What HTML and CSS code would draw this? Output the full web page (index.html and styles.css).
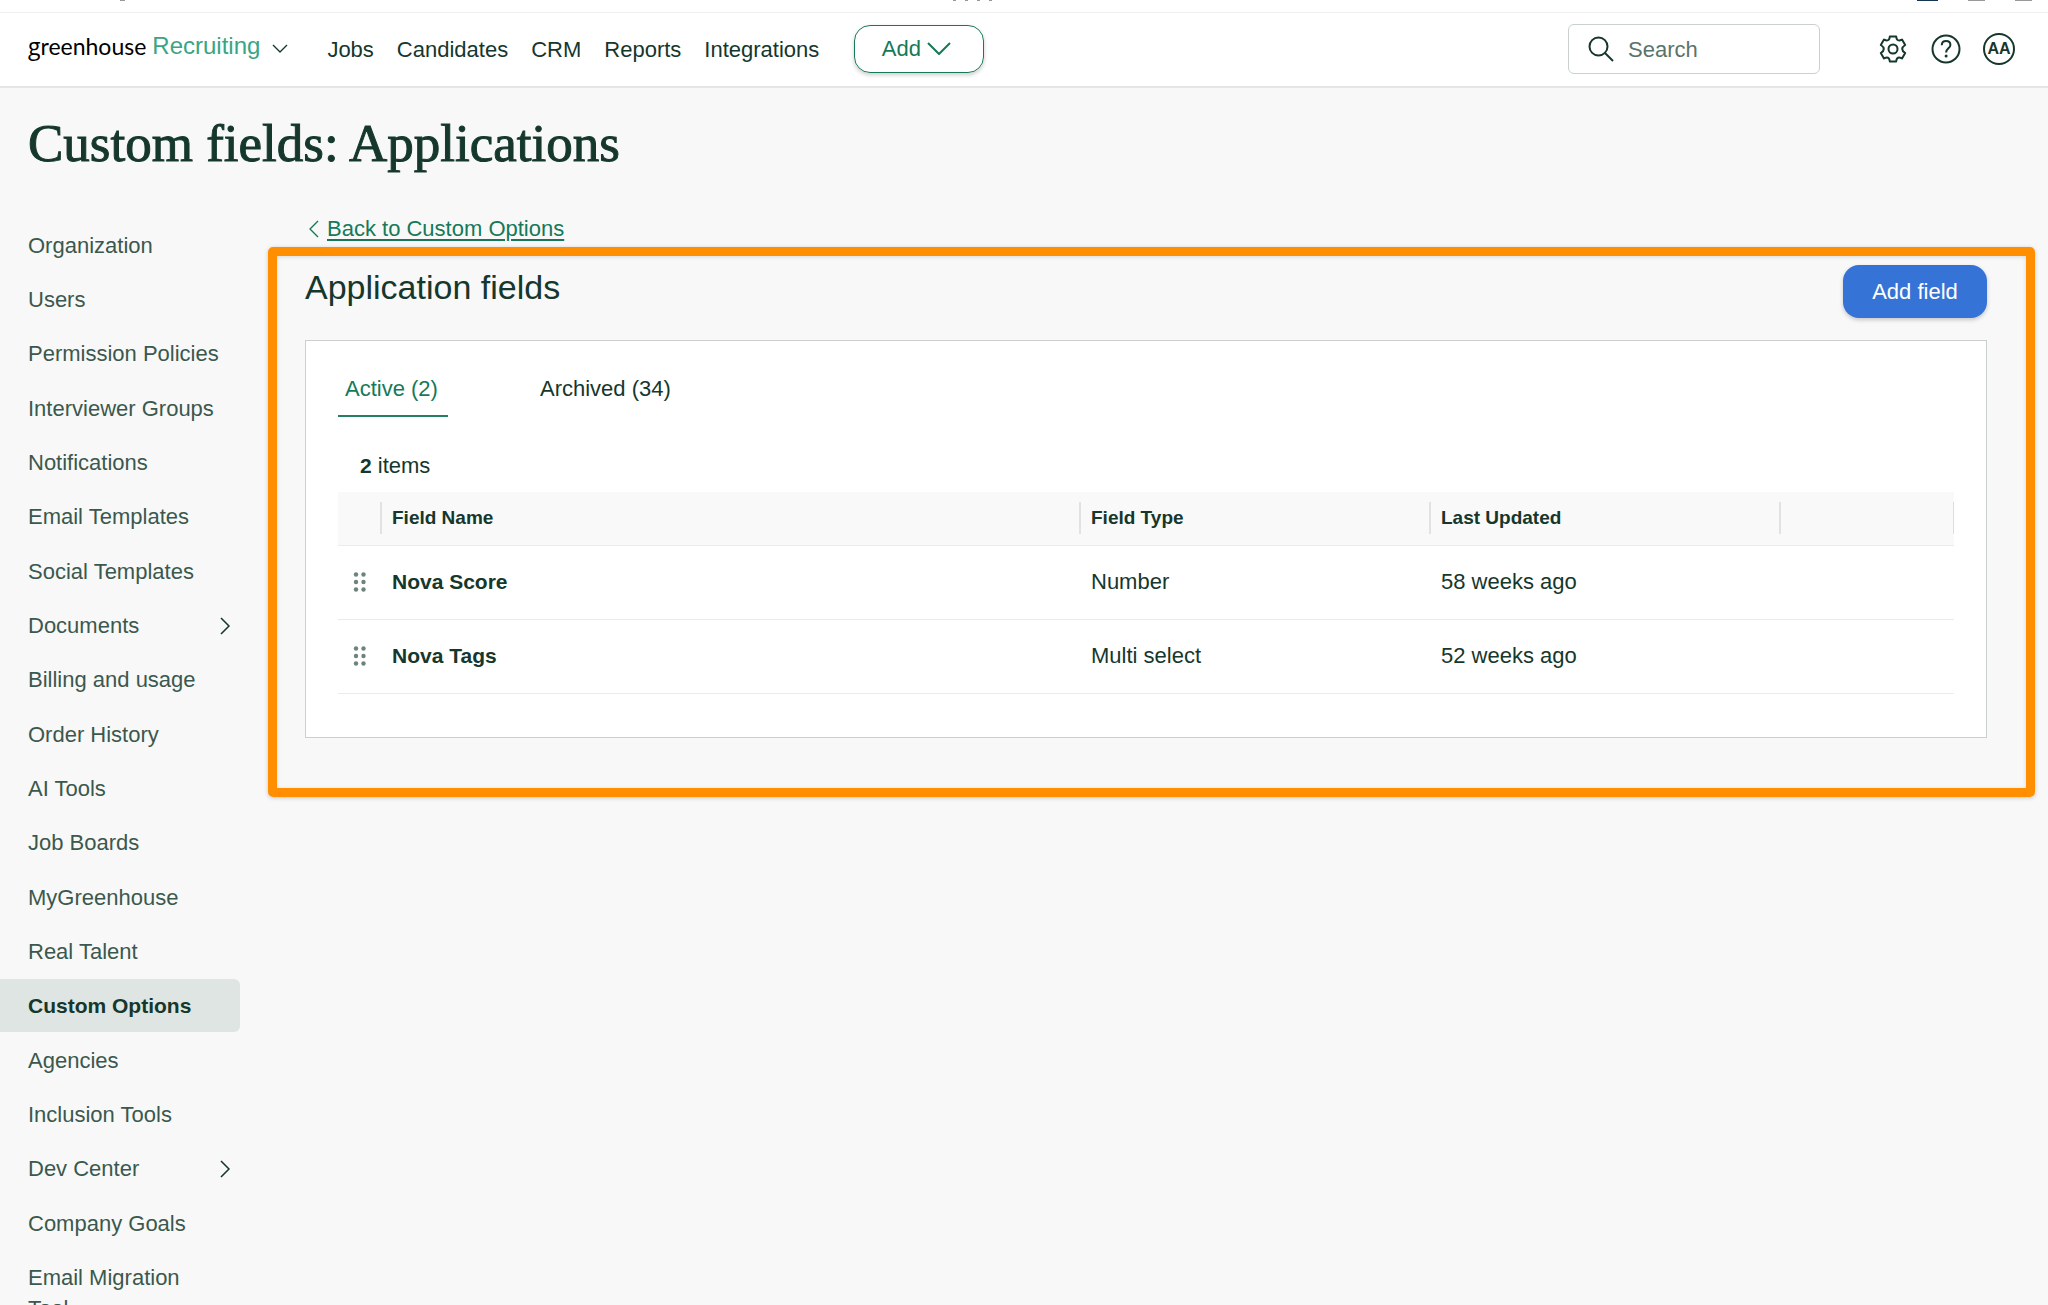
FILE: index.html
```html
<!DOCTYPE html>
<html lang="en">
<head>
<meta charset="utf-8">
<title>Custom fields: Applications</title>
<link rel="stylesheet" href="styles.css">
</head>
<body>
<div class="strip"><i class="bit bit-text"></i><i class="bit bit-mid"></i><span class="strip-end"><i class="bit bit-navy"></i><i class="bit bit-dot"></i><i class="bit bit-dot"></i></span></div>
<header class="header">
  <a class="brand" href="#"><span class="brand-name"><span class="brand-g">g</span>reenhouse</span><span class="brand-product">Recruiting</span>
    <svg class="brand-arrow" width="16" height="10" viewBox="0 0 16 10"><path d="M1 1l7 7 7-7"/></svg></a>
  <nav class="nav">
    <a href="#">Jobs</a><a href="#">Candidates</a><a href="#">CRM</a><a href="#">Reports</a><a href="#">Integrations</a>
  </nav>
  <button class="add" type="button">Add<svg width="24" height="14" viewBox="0 0 24 14"><path d="M1 1l11 11L23 1"/></svg></button>
  <label class="search">
    <svg width="26" height="26" viewBox="0 0 26 26"><circle cx="10.500" cy="10.500" r="9"/><path d="M17 17l8 8"/></svg>
    <input type="search" placeholder="Search" aria-label="Search">
  </label>
  <div class="tools">
    <button type="button" aria-label="Settings"><svg width="32" height="32" viewBox="0 0 32 32"><path d="M12.800 3.500h6.400c.2 2.600 1.200 4 3 4 .9 0 1.700-.4 2.800-.9l3.200 5.400c-2.400 1.500-3 2.700-3 4s.6 2.500 3 4L25 25.400c-1.100-.5-1.900-.9-2.800-.9-1.800 0-2.800 1.400-3 4h-6.400c-.2-2.600-1.200-4-3-4-.9 0-1.700.4-2.800.9L3.800 20c2.400-1.500 3-2.700 3-4s-.6-2.500-3-4L7 6.600c1.100.5 1.900.9 2.800.9 1.800 0 2.800-1.400 3-4z"/><circle cx="16" cy="16" r="4.500"/></svg></button>
    <button type="button" aria-label="Help"><svg width="32" height="32" viewBox="0 0 32 32"><circle cx="16" cy="16" r="13.500"/><path d="M11.800 12.200c0-2.600 1.700-4.200 4.300-4.200s4.300 1.600 4.300 3.900c0 3.500-4.300 3.400-4.300 7.600"/><circle class="dot" cx="16.100" cy="23" r="1.500"/></svg></button>
    <button class="avatar" type="button">AA</button>
  </div>
</header>
<h1 class="title">Custom fields: Applications</h1>
<div class="layout">
  <nav class="side" aria-label="Configure">
    <a href="#">Organization</a>
    <a href="#">Users</a>
    <a href="#">Permission Policies</a>
    <a href="#">Interviewer Groups</a>
    <a href="#">Notifications</a>
    <a href="#">Email Templates</a>
    <a href="#">Social Templates</a>
    <a href="#">Documents<svg width="10" height="18" viewBox="0 0 10 18"><path d="M1 1l8 8-8 8"/></svg></a>
    <a href="#">Billing and usage</a>
    <a href="#">Order History</a>
    <a href="#">AI Tools</a>
    <a href="#">Job Boards</a>
    <a href="#">MyGreenhouse</a>
    <a href="#">Real Talent</a>
    <a class="current" href="#" aria-current="page">Custom Options</a>
    <a href="#">Agencies</a>
    <a href="#">Inclusion Tools</a>
    <a href="#">Dev Center<svg width="10" height="18" viewBox="0 0 10 18"><path d="M1 1l8 8-8 8"/></svg></a>
    <a href="#">Company Goals</a>
    <a href="#">Email Migration Tool</a>
  </nav>
  <main class="main">
    <div class="back"><svg width="10" height="18" viewBox="0 0 10 18"><path d="M9 1L1 9l8 8"/></svg><a href="#">Back to Custom Options</a></div>
    <section class="frame">
      <div class="frame-head">
        <h2>Application fields</h2>
        <button class="primary" type="button">Add field</button>
      </div>
      <div class="card">
        <div class="tabs" role="tablist">
          <button class="tab selected" type="button" role="tab" aria-selected="true">Active (2)</button>
          <button class="tab" type="button" role="tab" aria-selected="false">Archived (34)</button>
        </div>
        <p class="count"><b>2</b> items</p>
        <table class="fields">
          <colgroup><col class="c-grip"><col><col class="c-mid"><col class="c-mid"><col class="c-end"></colgroup>
          <thead>
            <tr><th></th><th><div>Field Name</div></th><th><div>Field Type</div></th><th><div>Last Updated</div></th><th><div class="last"></div></th></tr>
          </thead>
          <tbody>
            <tr><td class="grip"><svg width="14" height="20" viewBox="0 0 14 20"><circle cx="3" cy="2.500" r="2.200"/><circle cx="10.500" cy="2.500" r="2.200"/><circle cx="3" cy="10" r="2.200"/><circle cx="10.500" cy="10" r="2.200"/><circle cx="3" cy="17.500" r="2.200"/><circle cx="10.500" cy="17.500" r="2.200"/></svg></td><td class="name">Nova Score</td><td>Number</td><td>58 weeks ago</td><td></td></tr>
            <tr><td class="grip"><svg width="14" height="20" viewBox="0 0 14 20"><circle cx="3" cy="2.500" r="2.200"/><circle cx="10.500" cy="2.500" r="2.200"/><circle cx="3" cy="10" r="2.200"/><circle cx="10.500" cy="10" r="2.200"/><circle cx="3" cy="17.500" r="2.200"/><circle cx="10.500" cy="17.500" r="2.200"/></svg></td><td class="name">Nova Tags</td><td>Multi select</td><td>52 weeks ago</td><td></td></tr>
          </tbody>
        </table>
      </div>
    </section>
  </main>
</div>
</body>
</html>
```
FILE: styles.css
```css
* { box-sizing: border-box; }
body {
  margin: 0;
  height: 100vh;
  overflow: hidden;
  background: #f8f8f8;
  color: #15372c;
  font: 22px/32px "Liberation Sans", Arial, sans-serif;
}
a { color: inherit; text-decoration: none; }
button { font: inherit; color: inherit; background: none; border: 0; padding: 0; }
svg { fill: none; stroke: currentColor; stroke-width: 2; stroke-linejoin: round; flex: none; }

.strip {
  display: flex;
  align-items: flex-start;
  height: 13px;
  padding: 0 16px 0 120px;
  background: #fff;
  border-bottom: 1px solid #eee;
}
.bit { height: 1px; background: #999; }
.bit-text { width: 5px; }
.bit-mid { width: 42px; margin-left: 828px; background: repeating-linear-gradient(90deg, #999 0 3px, #fff 3px 12px); }
.strip-end { display: flex; gap: 30px; margin-left: auto; }
.bit-navy { width: 21px; background: #16344d; }
.bit-dot { width: 17px; }

.header {
  display: flex;
  align-items: center;
  height: 75px;
  padding: 0 33px 2px 28px;
  background: #fff;
  border-bottom: 2px solid #e5e5e5;
}
.brand { display: flex; align-items: center; gap: 6px; padding-bottom: 6px; }
.brand-name { color: #000; font: 23px/32px Lato, sans-serif; }
.brand-g { font-family: "Open Sans", sans-serif; }
.brand-product { color: #3aa583; font-size: 24px; }
.brand-arrow { margin: 6px 0 0 6px; stroke-width: 1.4; }
.nav { display: flex; gap: 23px; margin-left: 39px; padding-top: 2px; }
.add {
  display: flex;
  align-items: center;
  justify-content: center;
  gap: 6px;
  width: 130px;
  height: 48px;
  margin-left: 35px;
  padding: 1px 6px 0 0;
  color: #15795a;
  border: 1px solid #15795a;
  border-radius: 16px;
  box-shadow: 0 2px 4px #0003;
}
.search {
  display: flex;
  align-items: center;
  gap: 14px;
  width: 252px;
  height: 50px;
  margin-left: auto;
  padding: 0 19px;
  border: 1px solid #c9d1ce;
  border-radius: 6px;
}
.search input {
  width: 100%;
  min-width: 0;
  padding: 2px 0 0;
  border: 0;
  outline: 0;
  background: none;
  font: inherit;
}
.search input::placeholder { color: #5b736b; opacity: 1; }
.tools { display: flex; gap: 21px; margin-left: 57px; }
.tools button { height: 32px; }
.tools svg { display: block; }
.tools .dot { fill: currentColor; stroke: none; }
.tools .avatar {
  width: 32px;
  border: 2px solid #15372c;
  border-radius: 50%;
  font-size: 16px;
  line-height: 28px;
  font-weight: 700;
}

.title {
  margin: 0;
  padding: 24px 28px 0;
  font: 400 53px/62px "Liberation Serif", serif;
  -webkit-text-stroke: 1px currentColor;
}
.layout { display: flex; align-items: flex-start; padding-top: 45px; }
.side { display: flex; flex-direction: column; width: 240px; margin-right: 28px; flex: none; line-height: 31px; color: #3b584e; }
.side a {
  display: flex;
  align-items: center;
  justify-content: space-between;
  margin-bottom: 1px;
  padding: 11px 20px 11px 28px;
}
.side a:nth-child(3n) { margin-bottom: 2px; }
.side svg { margin-right: -10px; color: #15372c; stroke-width: 1.6; }
.side .current { background: #dfe5e2; color: #15372c; border-radius: 0 6px 6px 0; font-size: 21px; font-weight: 700; }

.main { flex: 1; min-width: 0; margin-right: 13px; }
.back { display: flex; align-items: center; gap: 8px; height: 28px; padding: 0 0 8px 41px; color: #15795a; }
.back svg { stroke-width: 1.4; }
.back a { text-decoration: underline; text-decoration-thickness: 2px; text-underline-offset: 3px; }
.frame {
  padding: 9px 39px 50px 28px;
  border: 9px solid #ff8f00;
  border-radius: 5px;
  box-shadow: 0 1px 4px #0003, inset 0 1px 4px #0002;
}
.frame-head { display: flex; justify-content: space-between; }
.frame-head h2 { margin: 0; font-size: 34px; line-height: 44px; font-weight: 400; }
.primary {
  width: 144px;
  height: 53px;
  border-radius: 16px;
  background: #3574d6;
  color: #fff;
  box-shadow: 0 2px 4px #0003;
}
.card { margin-top: 22px; padding: 32px 32px 43px; border: 1px solid #cbd0ce; background: #fff; }
.tabs { display: flex; gap: 85px; }
.tab { min-width: 110px; height: 44px; padding: 0 7px 10px; text-align: left; border-bottom: 2px solid transparent; }
.selected { color: #15795a; border-color: #24805f; }
.count { margin: 0; padding: 33px 22px 10px; }
.count b { font-size: 21px; }
.fields { width: 100%; table-layout: fixed; border-collapse: collapse; }
.c-grip { width: 42px; }
.c-mid { width: 350px; }
.c-end { width: 175px; }
.fields th { height: 53px; padding: 0; background: #f9f9f9; text-align: left; font-size: 19px; border-bottom: 1px solid #ececec; }
.fields th div { height: 32px; padding-left: 10px; border-left: 2px solid #e2e2e2; }
.fields th .last { border-right: 1px solid #ddd; }
.fields td { height: 74px; padding: 0 12px; border-bottom: 1px solid #ebebeb; }
.fields .name { font-size: 21px; font-weight: 700; }
.fields .grip { padding: 0 0 0 15px; }
.grip svg { display: block; fill: #6d837b; stroke: none; }
```
